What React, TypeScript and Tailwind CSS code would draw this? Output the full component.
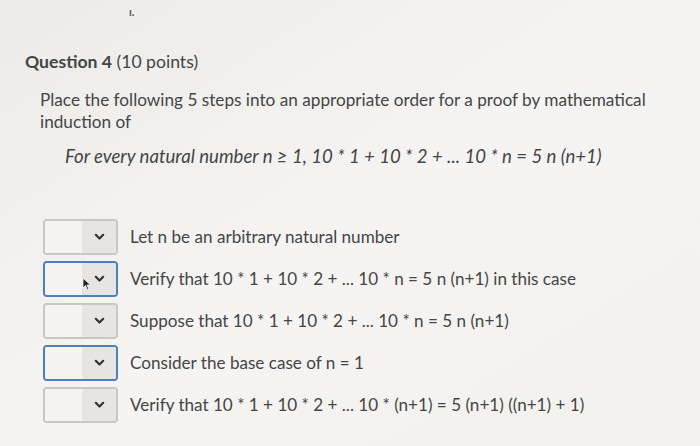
import React from 'react';

const steps = [
  { text: 'Let n be an arbitrary natural number', active: false },
  { text: 'Verify that 10 * 1 + 10 * 2 + ... 10 * n = 5 n (n+1) in this case', active: true, cursor: true },
  { text: 'Suppose that 10 * 1 + 10 * 2 + ... 10 * n = 5 n (n+1)', active: false },
  { text: 'Consider the base case of n = 1', active: true },
  { text: 'Verify that 10 * 1 + 10 * 2 + ... 10 * (n+1) = 5 (n+1) ((n+1) + 1)', active: false },
];

function Chevron() {
  return (
    <svg width="11" height="8" viewBox="0 0 11 8" fill="none">
      <path d="M1.8 1.8 L5.5 5.5 L9.2 1.8" stroke="#333" strokeWidth="2.2" strokeLinecap="round" strokeLinejoin="round" />
    </svg>
  );
}

function SelectBox({ active, cursor }: { active: boolean; cursor?: boolean }) {
  return (
    <div
      className={`relative flex h-[36px] w-[75px] shrink-0 overflow-hidden rounded-[4px] border-2 ${
        active ? 'border-[#4f7fbd]' : 'border-[#c9c7c4]'
      }`}
    >
      <div className="w-[37px] bg-[#f5f4f2]" />
      <div className="flex flex-1 items-center justify-center bg-[#e6e5e3]">
        <Chevron />
      </div>
      {cursor && (
        <svg className="absolute left-[37px] top-[14px]" width="10" height="14" viewBox="0 0 10 14">
          <path d="M1 1 L1 11 L3.5 8.5 L5.5 13 L7 12.3 L5 8 L8.5 8 Z" fill="#222" stroke="#fff" strokeWidth="0.8" />
        </svg>
      )}
    </div>
  );
}

export default function App() {
  return (
    <div
      className="h-[446px] w-[700px] overflow-hidden bg-gradient-to-br from-[#edebe8] via-[#f5f4f2] to-[#f2f1ee] text-[#454545]"
      style={{ fontFamily: 'Lato, "Open Sans", sans-serif' }}
    >
      <div className="h-[50px] pl-[129px] pt-[6px] text-[11px] font-bold leading-none text-[#555]">ı.</div>
      <div className="pl-[25px] text-[17.6px] leading-[24px]">
        <span className="font-bold">Question 4</span> (10 points)
      </div>
      <div className="mt-[15px] pl-[40px] pr-[30px] text-[17.2px] leading-[22px]">
        Place the following 5 steps into an appropriate order for a proof by mathematical induction of
      </div>
      <div className="mt-[11px] pl-[65px] text-[18.6px] italic leading-[24px]">
        For every natural number n ≥ 1, 10 * 1 + 10 * 2 + ... 10 * n = 5 n (n+1)
      </div>
      <div className="mt-[51px] flex flex-col gap-[6px] pl-[43px]">
        {steps.map((s, i) => (
          <div key={i} className="flex items-center gap-[12px]">
            <SelectBox active={s.active} cursor={s.cursor} />
            <span className="text-[17.1px] leading-[24px]">{s.text}</span>
          </div>
        ))}
      </div>
    </div>
  );
}
